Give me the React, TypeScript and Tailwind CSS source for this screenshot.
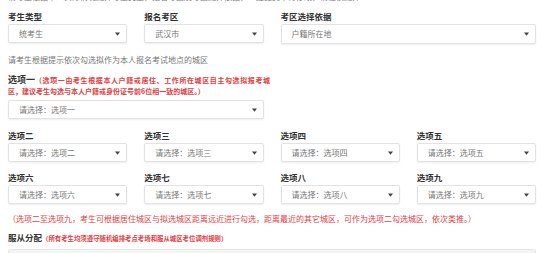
const font = { fontFamily: '"Noto Sans CJK SC", "Noto Sans", sans-serif' }

function Caret() {
  return (
    <svg width="5" height="4" viewBox="0 0 5 4" className="flex-none">
      <path d="M0 0.5h5L2.5 3.8z" fill="#444" />
    </svg>
  )
}

function Select({ value, className = '' }: { value: string; className?: string }) {
  return (
    <div
      className={`flex h-[19px] items-center justify-between rounded-[2px] border border-[#e2e2e2] bg-white pl-[10px] pr-[6px] text-[8px] text-[#777] shadow-[0_1px_2px_rgba(0,0,0,0.07)] ${className}`}
    >
      <span>{value}</span>
      <Caret />
    </div>
  )
}

function Field({ label, value, className = '' }: { label: string; value: string; className?: string }) {
  return (
    <div className={className}>
      <div className="mb-[2px] text-[8.5px] font-bold leading-[12px] text-[#333]">{label}</div>
      <Select value={value} />
    </div>
  )
}

const rowTwo = [
  ['选项二', '请选择：选项二'],
  ['选项三', '请选择：选项三'],
  ['选项四', '请选择：选项四'],
  ['选项五', '请选择：选项五'],
]
const rowThree = [
  ['选项六', '请选择：选项六'],
  ['选项七', '请选择：选项七'],
  ['选项八', '请选择：选项八'],
  ['选项九', '请选择：选项九'],
]

export default function App() {
  return (
    <div className="h-[253px] w-[555px] overflow-hidden bg-white pl-2 pr-[19px]" style={font}>
      {/* first line is scrolled mostly out of view */}
      <div className="h-[4px] overflow-hidden">
        <div className="-mt-[9px] whitespace-nowrap text-[8px] leading-[12px] text-[#777]">
          请考生根据本人实际情况选择考生类型，报名考区及考区选择依据，一经提交不得修改，请谨慎选择
        </div>
      </div>

      <div className="mt-[6px] grid grid-cols-4 gap-x-[17px]">
        <Field label="考生类型" value="统考生" />
        <Field label="报名考区" value="武汉市" />
        <div className="col-span-2">
          <div className="mb-[2px] text-[8.5px] font-bold leading-[12px] text-[#333]">考区选择依据</div>
          <Select value="户籍所在地" className="h-[20px]" />
        </div>
      </div>

      <div className="mt-[10px] text-[8px] leading-[12px] text-[#777]">
        请考生根据提示依次勾选拟作为本人报名考试地点的城区
      </div>

      <div className="grid grid-cols-4 gap-x-[17px]">
        <div className="col-span-2">
          <div className="mt-[8px] whitespace-nowrap text-[7px] leading-[11px]">
            <span className="text-[9px] font-bold text-[#333]">选项一</span>
            <span className="font-bold tracking-[0.6px] text-[#e0403f]">
              （选项一由考生根据本人户籍或居住、工作所在城区自主勾选拟报考城
            </span>
            <br />
            <span className="font-bold text-[#e0403f]">区，建议考生勾选与本人户籍或身份证号前6位相一致的城区。）</span>
          </div>
          <Select value="请选择：选项一" className="mt-[3px]" />
        </div>
      </div>

      <div className="mt-[10px] grid grid-cols-4 gap-x-[17px]">
        {rowTwo.map(([l, v]) => (
          <Field key={l} label={l} value={v} />
        ))}
      </div>

      <div className="mt-[9px] grid grid-cols-4 gap-x-[17px]">
        {rowThree.map(([l, v]) => (
          <Field key={l} label={l} value={v} />
        ))}
      </div>

      <div className="mt-[9px] whitespace-nowrap text-[8px] leading-[12px] text-[#e0403f]">
        （选项二至选项九，考生可根据居住城区与拟选城区距离远近进行勾选，距离最近的其它城区，可作为选项二勾选城区，依次类推。）
      </div>

      <div className="mt-[6px] whitespace-nowrap text-[8px] leading-[12px]">
        <span className="text-[8.5px] font-bold text-[#333]">服从分配</span>
        <span className="text-[6.4px] font-bold text-[#e0403f]">（所有考生均须遵守随机编排考点考场和服从城区考位调剂规则）</span>
      </div>

      <div className="mt-[4px] h-[30px] rounded-[2px] border border-[#e6e6e6] bg-[#f4f4f4]" />
    </div>
  )
}
